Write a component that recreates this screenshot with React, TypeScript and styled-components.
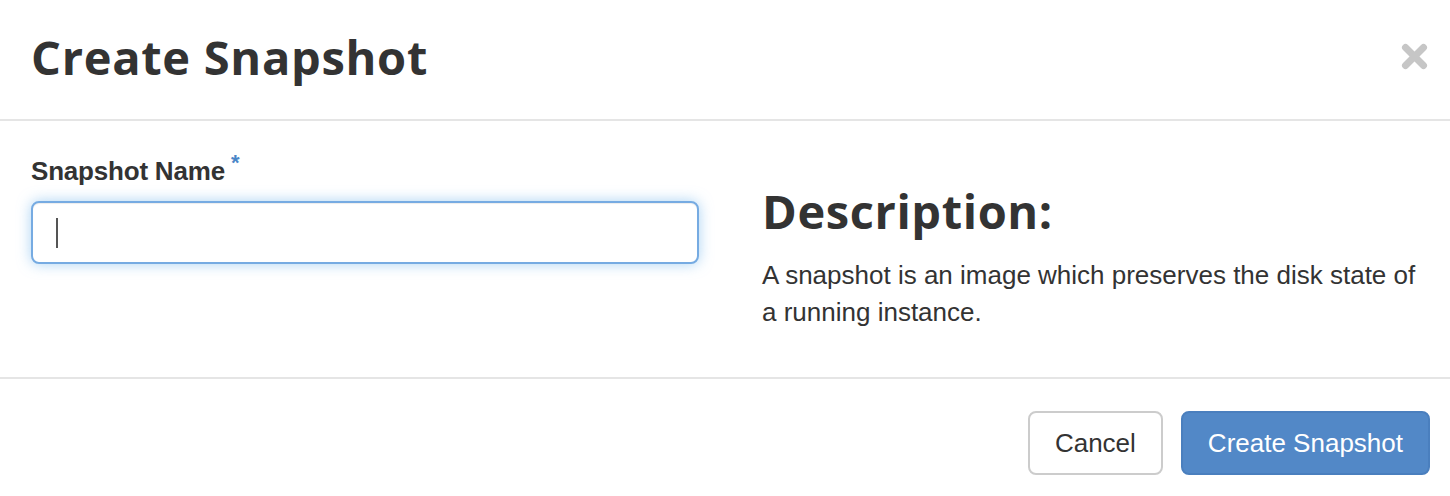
import React from "react";
import styled, { createGlobalStyle } from "styled-components";

const GlobalStyle = createGlobalStyle`
  html, body {
    margin: 0;
    padding: 0;
    background: #fff;
    color: #333;
    font-family: "Liberation Sans", Arial, sans-serif;
  }
  * { box-sizing: border-box; }
`;

const Modal = styled.div`
  width: 1450px;
  height: 496px;
  display: flex;
  flex-direction: column;
  background: #fff;
`;

const Header = styled.div`
  height: 121px;
  border-bottom: 2px solid #e5e5e5;
  padding: 0 22px 0 31px;
  display: flex;
  align-items: center;
  justify-content: space-between;
`;

const Title = styled.h4`
  margin: 0;
  font-family: "Open Sans", "DejaVu Sans", sans-serif;
  font-weight: 700;
  font-size: 47px;
  letter-spacing: 0.7px;
  color: #333;
  line-height: 1;
  padding-bottom: 4px;
`;

const CloseButton = styled.button`
  border: 0;
  background: transparent;
  padding: 0;
  margin-bottom: 6px;
  width: 28px;
  height: 28px;
  cursor: pointer;
  display: flex;
  align-items: center;
  justify-content: center;
`;

const Body = styled.div`
  height: 258px;
  border-bottom: 2px solid #e5e5e5;
  padding: 30px 30px 0 31px;
  display: grid;
  grid-template-columns: 668px 1fr;
  column-gap: 63px;
`;

const Field = styled.div`
  display: flex;
  flex-direction: column;
`;

const Label = styled.label`
  font-weight: 700;
  font-size: 26px;
  line-height: 40px;
  letter-spacing: -0.2px;
  color: #333;
  margin-bottom: 8px;
`;

const Required = styled.span`
  color: #4a86c8;
  font-size: 22px;
  margin-left: 6px;
  position: relative;
  top: -10px;
`;

const InputWrap = styled.div`
  position: relative;
`;

const TextInput = styled.input`
  width: 100%;
  height: 63px;
  border: 2px solid #76abe2;
  border-radius: 8px;
  padding: 0 23px;
  font-size: 26px;
  font-family: inherit;
  outline: none;
  caret-color: transparent;
  box-shadow: inset 0 1px 1px rgba(0, 0, 0, 0.075), 0 0 14px rgba(102, 175, 233, 0.55);
`;

const Caret = styled.span`
  position: absolute;
  left: 25px;
  top: 17px;
  width: 2px;
  height: 30px;
  background: #555;
`;

const Info = styled.div`
  padding-top: 32px;
`;

const InfoTitle = styled.h3`
  margin: 0 0 18px;
  font-family: "Open Sans", "DejaVu Sans", sans-serif;
  font-weight: 700;
  font-size: 47px;
  letter-spacing: 0.6px;
  line-height: 56px;
  color: #333;
`;

const InfoText = styled.p`
  margin: 0;
  font-size: 26px;
  line-height: 37px;
  color: #333;
`;

const Footer = styled.div`
  flex: 1;
  display: flex;
  justify-content: flex-end;
  align-items: flex-start;
  gap: 18px;
  padding: 32px 20px 0 0;
`;

const Button = styled.button<{ $primary?: boolean }>`
  height: 64px;
  padding: 0 25px;
  border-radius: 8px;
  font-family: "Liberation Sans", Arial, sans-serif;
  font-size: 26px;
  cursor: pointer;
  border: 2px solid ${(p) => (p.$primary ? "#4a7fbe" : "#cccccc")};
  background: ${(p) => (p.$primary ? "#5288c7" : "#fff")};
  color: ${(p) => (p.$primary ? "#fff" : "#333")};
`;

const CloseIcon = () => (
  <svg width="27" height="27" viewBox="0 0 27 27">
    <g stroke="#c6c6c6" strokeWidth="7" strokeLinecap="round">
      <line x1="4.5" y1="4.5" x2="22.5" y2="22.5" />
      <line x1="22.5" y1="4.5" x2="4.5" y2="22.5" />
    </g>
  </svg>
);

const App: React.FC = () => {
  return (
    <>
      <GlobalStyle />
      <Modal>
        <Header>
          <Title>Create Snapshot</Title>
          <CloseButton aria-label="Close">
            <CloseIcon />
          </CloseButton>
        </Header>
        <Body>
          <Field>
            <Label htmlFor="snapshot-name">
              Snapshot Name<Required>*</Required>
            </Label>
            <InputWrap>
              <TextInput id="snapshot-name" type="text" />
              <Caret />
            </InputWrap>
          </Field>
          <Info>
            <InfoTitle>Description:</InfoTitle>
            <InfoText>
              A snapshot is an image which preserves the disk state of a running instance.
            </InfoText>
          </Info>
        </Body>
        <Footer>
          <Button>Cancel</Button>
          <Button $primary>Create Snapshot</Button>
        </Footer>
      </Modal>
    </>
  );
};

export default App;
